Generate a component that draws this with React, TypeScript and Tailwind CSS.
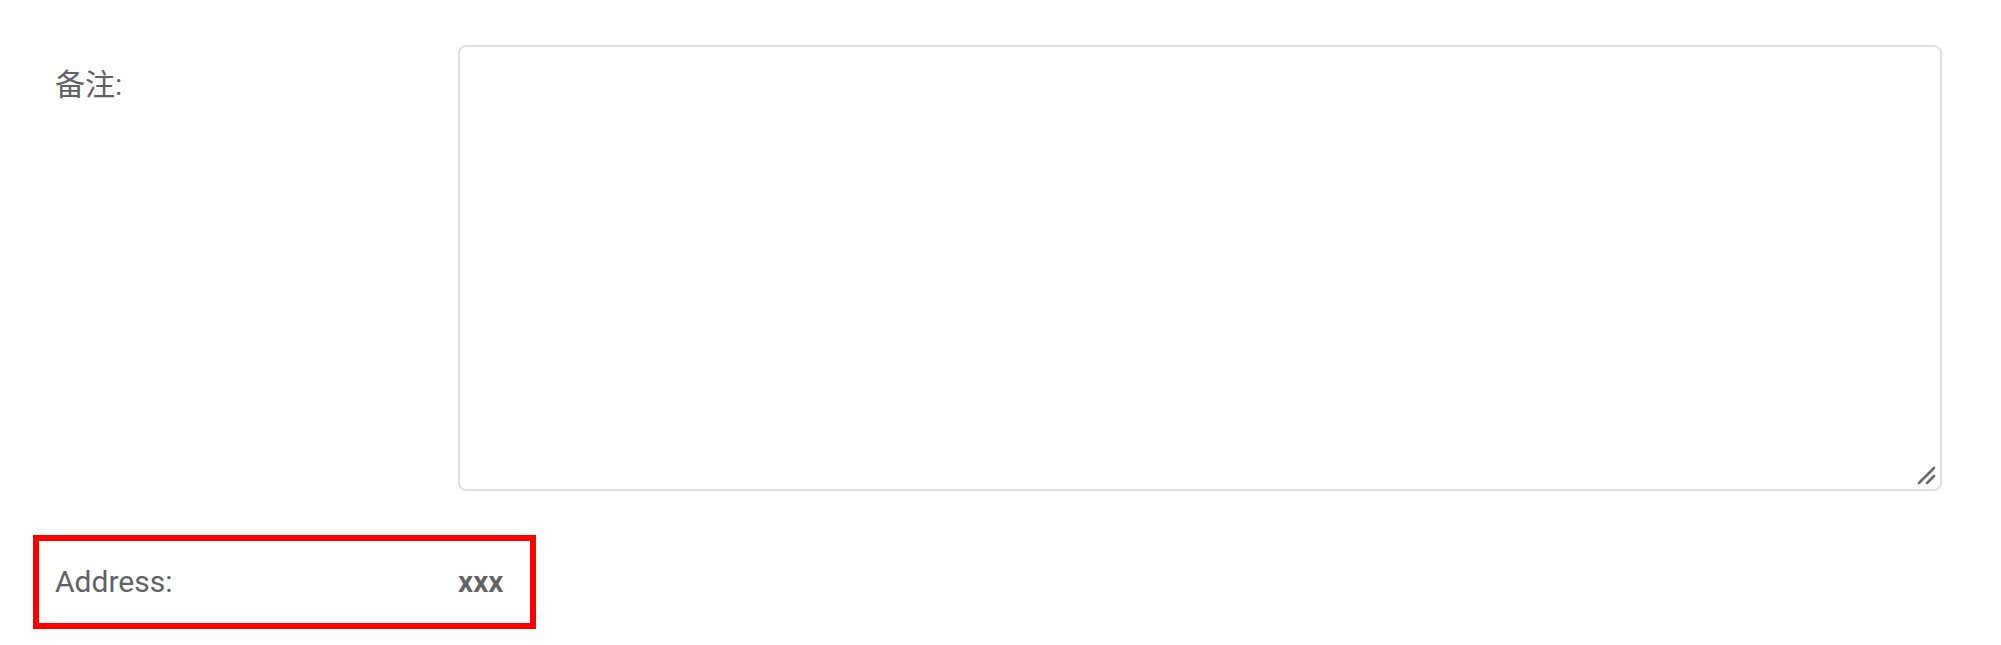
import { useState } from 'react';

const font = {
  fontFamily: 'Roboto, "Noto Sans CJK SC", sans-serif',
};

function ResizeGrip() {
  return (
    <svg
      className="pointer-events-none absolute bottom-[6px] right-[6px]"
      width="20"
      height="20"
      viewBox="0 0 20 20"
    >
      <line x1="3" y1="18" x2="18" y2="3" stroke="#6b6b6b" strokeWidth="2.6" strokeLinecap="round" />
      <line x1="11" y1="18" x2="18" y2="11" stroke="#6b6b6b" strokeWidth="2.6" strokeLinecap="round" />
    </svg>
  );
}

export default function App() {
  const [remark, setRemark] = useState('');

  return (
    <div className="min-h-[645px] w-full bg-white text-[30px] text-[#606266]" style={font}>
      <div className="pt-[45px] pr-[59px]">
        <div className="flex">
          <label className="w-[458px] shrink-0 pl-[55px] leading-[80px]">备注:</label>
          <div className="relative flex-1">
            <textarea
              value={remark}
              onChange={(e) => setRemark(e.target.value)}
              className="block h-[446px] w-full resize-none rounded-[8px] border-2 border-[#dedede] bg-white px-[30px] py-[10px] text-[30px] text-[#606266] outline-none"
            />
            <ResizeGrip />
          </div>
        </div>

        <div className="ml-[33px] mt-[44px] flex h-[94px] w-[503px] items-center border-[6px] border-[#ff0000]">
          <span className="w-[419px] shrink-0 pl-[16px] leading-[80px]">Address:</span>
          <span className="font-semibold leading-[80px]">xxx</span>
        </div>
      </div>
    </div>
  );
}
